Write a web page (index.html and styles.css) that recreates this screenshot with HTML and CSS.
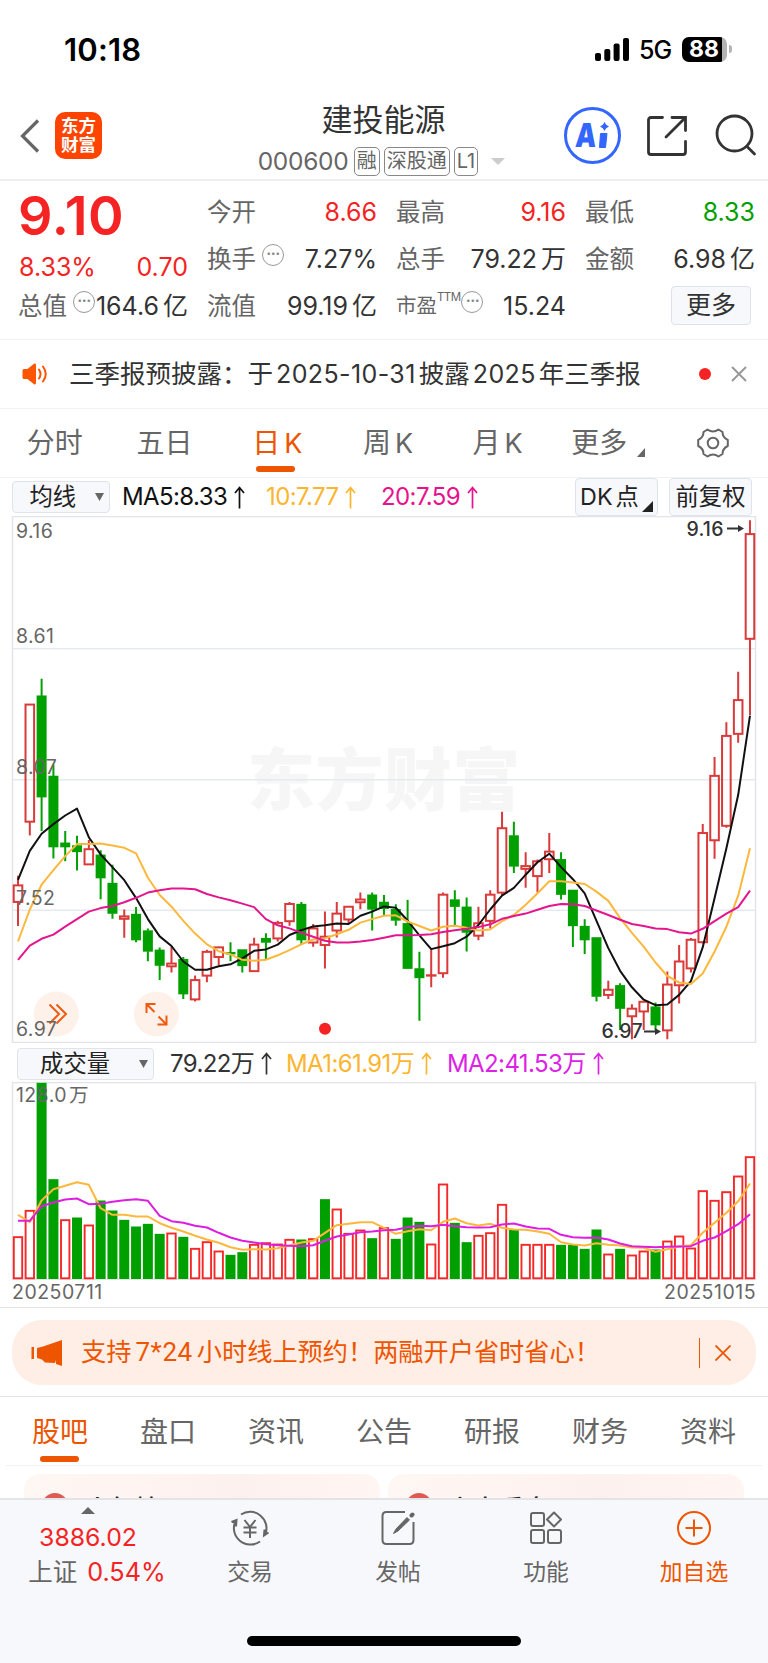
FILE: index.html
```
<!DOCTYPE html>
<html lang="zh-CN">
<head>
    <meta charset="UTF-8">
    <meta name="viewport" content="width=device-width, initial-scale=1.0">
    <title>建投能源 000600</title>
    <link rel="stylesheet" href="styles.css">
</head>
<body>
    <div class="status-bar">
        <div class="clock">10:18</div>
        <div class="status-icons">
            <svg width="34" height="23" viewBox="0 0 34 23">
                <rect x="0" y="15" width="6" height="8" rx="2"/>
                <rect x="9.3" y="11" width="6" height="12" rx="2"/>
                <rect x="18.6" y="5.5" width="6" height="17.5" rx="2"/>
                <rect x="28" y="0" width="6" height="23" rx="2"/>
            </svg>
            <span class="network">5G</span>
            <div class="battery"><span>88</span></div>
            <div class="battery-tip"></div>
        </div>
    </div>

    <div class="header">
        <div class="header-left">
            <svg width="20" height="34" viewBox="0 0 20 34" fill="none" stroke="#666" stroke-width="3.2"><path d="M18 1.5 L2.5 17 L18 32.5"/></svg>
            <div class="logo">东方<br>财富</div>
        </div>
        <div class="header-title">
            <h1>建投能源</h1>
            <div class="stock-code">
                <span class="code">000600</span>
                <span class="tag">融</span>
                <span class="tag">深股通</span>
                <span class="tag">L1</span>
                <svg width="14" height="7" viewBox="0 0 14 7"><path d="M0 0 H14 L7 7 Z" fill="#ccc"/></svg>
            </div>
        </div>
        <div class="header-right">
            <div class="ai-logo">
                <span>A</span>
                <svg width="12" height="27" viewBox="0 0 12 27" fill="#3366ff">
                    <path d="M7.5 0 L9.2 2.8 L12 4.5 L9.2 6.2 L7.5 9 L5.8 6.2 L3 4.5 L5.8 2.8 Z"/>
                    <path d="M3.5 11.5 H10 L8.5 25.5 H2.5 Z" stroke="#3366ff" stroke-linejoin="round"/>
                </svg>
            </div>
            <svg width="40" height="40" viewBox="0 0 40 40" fill="none" stroke="#333" stroke-width="2.8" stroke-linecap="round">
                <path d="M15.5 1.5 H4 Q1.5 1.5 1.5 4 V36 Q1.5 38.5 4 38.5 H36 Q38.5 38.5 38.5 36 V25.5"/>
                <path d="M25 1.5 H38.5 V14.5 M38 2 L19 21"/>
            </svg>
            <svg width="42" height="42" viewBox="0 0 42 42" fill="none" stroke="#333" stroke-width="2.8" stroke-linecap="round">
                <circle cx="19.5" cy="19.5" r="17.5"/>
                <path d="M32 32.5 L39.5 40"/>
            </svg>
        </div>
    </div>

    <div class="quote">
        <div class="quote-col">
            <div class="price">9.10</div>
            <div class="quote-row change"><b class="red">8.33%</b><b class="red">0.70</b></div>
            <div class="quote-row"><span>总值<i class="more-dot">···</i></span><b>164.6<em>亿</em></b></div>
        </div>
        <div class="quote-col">
            <div class="quote-row"><span>今开</span><b class="red">8.66</b></div>
            <div class="quote-row"><span>换手<i class="more-dot">···</i></span><b>7.27%</b></div>
            <div class="quote-row"><span>流值</span><b>99.19<em>亿</em></b></div>
        </div>
        <div class="quote-col">
            <div class="quote-row"><span>最高</span><b class="red">9.16</b></div>
            <div class="quote-row"><span>总手</span><b>79.22<em>万</em></b></div>
            <div class="quote-row"><span class="pe">市盈<sup>TTM</sup><i class="more-dot">···</i></span><b>15.24</b></div>
        </div>
        <div class="quote-col">
            <div class="quote-row"><span>最低</span><b class="green">8.33</b></div>
            <div class="quote-row"><span>金额</span><b>6.98<em>亿</em></b></div>
            <div class="quote-row last"><div class="more-btn">更多</div></div>
        </div>
    </div>

    <div class="notice">
        <svg width="26" height="22" viewBox="0 0 26 22" fill="#ff5500">
            <path d="M0.5 7.5 Q0.5 6 2 6 H5.5 L12 0.8 Q14 0 14 2 V20 Q14 22 12 21.2 L5.5 16 H2 Q0.5 16 0.5 14.5 Z"/>
            <path d="M17 6.5 Q20 11 17 15.5 M21 3.5 Q26.5 11 21 18.5" fill="none" stroke="#ff5500" stroke-width="2" stroke-linecap="round"/>
        </svg>
        <p>三季报预披露：于<span>2025-10-31</span>披露<span>2025</span>年三季报</p>
        <div class="dot"></div>
        <svg width="16" height="16" viewBox="0 0 16 16" stroke="#999" stroke-width="2"><path d="M1 1 L15 15 M15 1 L1 15"/></svg>
    </div>

    <div class="period-tabs">
        <div class="tab">分时</div>
        <div class="tab">五日</div>
        <div class="tab k active">日<span>K</span></div>
        <div class="tab k">周<span>K</span></div>
        <div class="tab k">月<span>K</span></div>
        <div class="tab more">更多<svg width="8" height="9" viewBox="0 0 8 9"><path d="M8 0 V9 H0 Z" fill="#666"/></svg></div>
        <div class="tab gear">
            <svg width="32" height="30" viewBox="0 0 32 30" fill="none" stroke="#666" stroke-width="2" stroke-linejoin="round">
                <path d="M10.5 1.5 Q16 5.5 21.5 1.5 L25.5 4 Q25.5 9.5 30.8 12 V18 Q25.5 20.5 25.5 26 L21.5 28.5 Q16 24.5 10.5 28.5 L6.5 26 Q6.5 20.5 1.2 18 V12 Q6.5 9.5 6.5 4 Z"/>
                <circle cx="16" cy="15" r="5.3"/>
            </svg>
        </div>
    </div>

    <div class="indicator-bar">
        <div class="select ma-select">均线<svg width="9" height="8" viewBox="0 0 9 8"><path d="M0 0 H9 L4.5 8 Z" fill="#666"/></svg></div>
        <div class="ma ma5">MA5:8.33<svg class="up"><use href="#arrow-up"/></svg></div>
        <div class="ma ma10">10:7.77<svg class="up"><use href="#arrow-up"/></svg></div>
        <div class="ma ma20">20:7.59<svg class="up"><use href="#arrow-up"/></svg></div>
        <div class="select dk-btn">DK<em>点</em><svg width="11" height="11" viewBox="0 0 11 11"><path d="M11 0 V11 H0 Z" fill="#222"/></svg></div>
        <div class="select">前复权</div>
    </div>

    <svg id="kline" class="chart" width="768" height="527" viewBox="0 0 768 527"></svg>

    <div class="indicator-bar volume-bar">
        <div class="select vol-select">成交量<svg width="9" height="8" viewBox="0 0 9 8"><path d="M0 0 H9 L4.5 8 Z" fill="#666"/></svg></div>
        <div class="ma vol">79.22万<svg class="up"><use href="#arrow-up"/></svg></div>
        <div class="ma ma10 vol1">MA1:61.91万<svg class="up"><use href="#arrow-up"/></svg></div>
        <div class="ma vol2">MA2:41.53万<svg class="up"><use href="#arrow-up"/></svg></div>
    </div>

    <svg id="volume" class="chart" width="768" height="198" viewBox="0 0 768 198"></svg>

    <div class="dates"><span>20250711</span><span>20251015</span></div>

    <div class="banner-wrap">
        <div class="banner">
            <svg width="31" height="26" viewBox="0 0 31 26" fill="#ee5500">
                <rect x="0.5" y="7" width="2.5" height="12"/>
                <path d="M6 8 L12 6.5 L31 0 V26 L25 24 V20 L24 23 L14 22.5 L11 19.5 L6 18 Z"/>
            </svg>
            <p>支持<span>7*24</span>小时线上预约！两融开户省时省心！</p>
            <div class="divider"></div>
            <svg width="16" height="16" viewBox="0 0 16 16" stroke="#ee5500" stroke-width="1.8"><path d="M0.5 0.5 L15.5 15.5 M15.5 0.5 L0.5 15.5"/></svg>
        </div>
    </div>

    <div class="info-tabs">
        <div class="tab active">股吧</div>
        <div class="tab">盘口</div>
        <div class="tab">资讯</div>
        <div class="tab">公告</div>
        <div class="tab">研报</div>
        <div class="tab">财务</div>
        <div class="tab">资料</div>
    </div>

    <div class="cards">
        <div class="card"><i></i>人气榜</div>
        <div class="card"><i></i>主力看盘</div>
    </div>

    <div class="bottom-bar">
        <div class="index">
            <svg width="14" height="7" viewBox="0 0 14 7"><path d="M0 7 H14 L7 0 Z" fill="#666"/></svg>
            <div class="index-value">3886.02</div>
            <div class="index-change">上证 <span>0.54%</span></div>
        </div>
        <div class="nav-item">
            <svg width="40" height="36" viewBox="0 0 40 36" fill="none" stroke="#666" stroke-width="2">
                <path d="M11 4.5 A16.5 16.5 0 0 1 35.5 24 M38.5 22.5 L34 25.5 L34.5 19.5"/>
                <path d="M30 31.5 A16.5 16.5 0 0 1 5.5 11 M1.5 12 L6.5 10 L6 16.5"/>
                <path d="M14.5 10 L20 17 L25.5 10 M13.5 17.5 H26.5 M13.5 22.5 H26.5 M20 17 V28"/>
            </svg>
            <span>交易</span>
        </div>
        <div class="nav-item">
            <svg width="34" height="36" viewBox="0 0 34 36" fill="none" stroke="#666" stroke-width="2">
                <path d="M24 2 H5.5 Q1.5 2 1.5 6 V30 Q1.5 34 5.5 34 H28.5 Q32.5 34 32.5 30 V12"/>
                <path d="M12.5 23.5 L15 19 L26 7.5 L28.5 10 L17 21 Z" fill="#666" stroke-width="1" stroke-linejoin="round"/>
                <path d="M30.5 5.5 L31.5 4.5" stroke-width="4" stroke-linecap="round"/>
            </svg>
            <span>发帖</span>
        </div>
        <div class="nav-item">
            <svg width="34" height="36" viewBox="0 0 34 36" fill="none" stroke="#666" stroke-width="2">
                <rect x="2" y="3" width="13" height="13" rx="2"/>
                <rect x="2" y="20" width="13" height="13" rx="2"/>
                <rect x="19" y="20" width="13" height="13" rx="2"/>
                <path d="M25 2.5 L32 9.5 L25 16.5 L18 9.5 Z" stroke-linejoin="round"/>
            </svg>
            <span>功能</span>
        </div>
        <div class="nav-item add">
            <svg width="36" height="36" viewBox="0 0 36 36" fill="none" stroke="#ee5500" stroke-width="2">
                <circle cx="18" cy="18" r="16"/>
                <path d="M18 9.5 V26.5 M9.5 18 H26.5"/>
            </svg>
            <span>加自选</span>
        </div>
        <div class="home-indicator"></div>
    </div>

    <svg class="defs">
        <symbol id="arrow-up" viewBox="0 0 11 23"><path d="M5.5 22.5 V1.5 M1 7 L5.5 1.5 L10 7" fill="none" stroke="currentColor" stroke-width="1.7"/></symbol>
    </svg>
    <script src="script.js"></script>
</body>
</html>
```
FILE: styles.css
```
body {
    margin: 0;
    width: 768px;
    height: 1663px;
    overflow: hidden;
    background-color: #fff;
    color: #333;
    font-family: Inter, "Noto Sans CJK SC", sans-serif;
    font-size: 24px;
    line-height: 1;
}

* {
    box-sizing: border-box;
}

svg {
    display: block;
    flex: none;
}

i, em {
    font-style: normal;
}

h1, p {
    margin: 0;
    font-weight: normal;
    white-space: nowrap;
}

.defs {
    position: absolute;
    width: 0;
    height: 0;
}

.red {
    color: #f52323 !important;
}

.green {
    color: #00a000 !important;
}

/* status bar */
.status-bar {
    display: flex;
    justify-content: space-between;
    align-items: center;
    height: 98px;
    padding: 0 36px 0 64px;
    color: #000;
}

.clock {
    font-size: 31px;
    font-weight: 600;
    letter-spacing: 0.2px;
}

.status-icons {
    display: flex;
    align-items: center;
}

.network {
    margin: 3px 0 0 10px;
    width: 43px;
    font-size: 25px;
    font-weight: 500;
    letter-spacing: -1px;
}

.battery {
    width: 45px;
    height: 25px;
    border-radius: 7px;
    background: linear-gradient(to right, #000 40px, #b3b3b3 40px);
    color: #fff;
    font-size: 23px;
    font-weight: 700;
    line-height: 25px;
    padding-left: 7px;
}

.battery-tip {
    width: 3px;
    height: 8px;
    margin-left: 2px;
    border-radius: 0 4px 4px 0;
    background-color: #b3b3b3;
}

/* header */
.header {
    display: flex;
    height: 83px;
    border-bottom: 2px solid #eee;
}

.header-left {
    display: flex;
    align-items: center;
    width: 200px;
    padding: 0 0 7px 20px;
    gap: 15px;
}

.header-left svg {
    margin-top: 1px;
}

.logo {
    width: 47px;
    height: 47px;
    border-radius: 10px;
    background-color: #ff4400;
    color: #fff;
    font-size: 17.5px;
    font-weight: 700;
    line-height: 19px;
    text-align: center;
    padding-top: 4px;
}

.header-title {
    width: 367px;
    display: flex;
    flex-direction: column;
    align-items: center;
}

h1 {
    margin-top: 6px;
    font-size: 31px;
    line-height: 32px;
}

.stock-code {
    display: flex;
    align-items: center;
    margin: 10px 4px 0 0;
    height: 30px;
    gap: 4px;
    color: #666;
}

.code {
    width: 92px;
    font-size: 24.5px;
    letter-spacing: -0.3px;
}

.tag {
    height: 29px;
    border: 1.5px solid #888;
    border-radius: 5px;
    padding: 0 2px;
    font-size: 20px;
    line-height: 27px;
}

.stock-code svg {
    margin-left: 9px;
}

.header-right {
    display: flex;
    align-items: flex-start;
    padding: 18px 11px 0 0;
    margin-left: -3px;
    height: 81px;
}

.header-right > svg {
    margin: 0 0 0 26px;
}

.header-right > svg:last-child {
    margin-left: 28px;
    margin-top: -2px;
}

.ai-logo {
    display: flex;
    align-items: center;
    justify-content: center;
    width: 57px;
    height: 57px;
    margin-top: -9px;
    border: 3px solid #3366ff;
    border-radius: 50%;
    color: #3366ff;
    font-size: 33px;
    font-weight: 900;
}

.ai-logo span {
    margin: 0 -2px 0 -3px;
    transform: scaleX(0.8) skewX(-5deg);
}

/* quote */
.quote {
    display: flex;
    gap: 20px;
    height: 159px;
    padding: 8px 13px 0 19px;
    border-bottom: 1.5px solid #f2f2f5;
}

.quote-col {
    width: 169px;
}

.quote-row {
    display: flex;
    justify-content: space-between;
    align-items: center;
    height: 47px;
    white-space: nowrap;
}

.quote-row span {
    display: flex;
    align-items: center;
    color: #666;
    font-size: 24.5px;
    margin-left: -1px;
}

.quote-row b {
    font-size: 25px;
    font-weight: 400;
    color: #333;
}

.quote-row em {
    margin-left: 4px;
}

.price {
    height: 54px;
    font-size: 54px;
    font-weight: 600;
    line-height: 54px;
    color: #f52323;
    letter-spacing: 0.6px;
    margin-left: -1px;
}

.change {
    height: 40px;
    margin-top: 4px;
    margin-bottom: -4px;
}

.more-dot {
    width: 22px;
    height: 22px;
    margin: -10px 0 0 6px;
    border: 1.8px solid #999;
    border-radius: 50%;
    color: #888;
    font-size: 15px;
    font-weight: 700;
    line-height: 18px;
    text-align: center;
    letter-spacing: -0.5px;
}

.quote-col:first-child .quote-row:last-child b {
    margin-left: -6px;
}

.quote-row .pe {
    font-size: 20.5px;
}

.pe sup {
    font-size: 11.5px;
    letter-spacing: -0.6px;
    margin: -18px 0 0 0;
    line-height: 15px;
}

.pe .more-dot {
    margin-left: 1px;
}

.quote-row.last {
    justify-content: flex-end;
    padding-right: 4px;
    height: 44px;
}

.more-btn {
    width: 80px;
    height: 39px;
    border: 1.5px solid #dfe2ea;
    border-radius: 4px;
    background-color: #f7f8fb;
    text-align: center;
    line-height: 36px;
    font-size: 25px;
}

/* notice */
.notice {
    display: flex;
    align-items: center;
    height: 69px;
    padding: 0 21px 0 22px;
    border-bottom: 1.5px solid #f2f2f5;
}

.notice p {
    flex: 1;
    margin-left: 21px;
    font-size: 25.5px;
}

.notice span {
    margin: 0 3px;
    font-size: 25px;
    letter-spacing: 0.4px;
}

.dot {
    width: 12px;
    height: 12px;
    margin-right: 20px;
    border-radius: 50%;
    background-color: #f52323;
}

/* tabs */
.period-tabs,
.info-tabs {
    display: flex;
    height: 69px;
    border-bottom: 1.5px solid #f2f2f5;
}

.tab {
    position: relative;
    flex: none;
    width: 14.285%;
    display: flex;
    align-items: center;
    justify-content: center;
    color: #666;
    font-size: 28px;
}

.tab span {
    margin-left: 4px;
    font-size: 27px;
}

.tab.active {
    color: #ee5500;
}

.tab.active::after {
    content: "";
    position: absolute;
    left: 50%;
    bottom: 5px;
    width: 39px;
    height: 6px;
    margin-left: -20px;
    border-radius: 3px;
    background-color: #ee5500;
}

.tab.k {
    padding-left: 6px;
}

.tab.k + .tab.k {
    padding-left: 8px;
}

.tab.k.active::after {
    margin-left: -18px;
}

.tab.more {
    padding-left: 10px;
}

.tab.more svg {
    margin: 19px 0 0 10px;
}

/* indicator bars */
.indicator-bar {
    position: relative;
    display: flex;
    align-items: center;
    height: 38px;
    padding: 0 16px 0 12px;
    white-space: nowrap;
}

.select {
    position: relative;
    display: flex;
    align-items: center;
    justify-content: center;
    height: 38px;
    width: 83px;
    border: 1.5px solid #e0e3ea;
    border-radius: 4px;
    background-color: #f7f8fb;
    color: #222;
    font-size: 23.3px;
}

.select em {
    margin-left: 3px;
}

.ma-select,
.vol-select {
    width: 98px;
    height: 32px;
    justify-content: flex-end;
    padding-right: 5px;
}

.ma-select svg,
.vol-select svg {
    margin-left: 19px;
}

.dk-btn {
    margin: 0 11px 0 auto;
    padding-right: 14px;
}

.dk-btn svg {
    position: absolute;
    right: 4px;
    bottom: 3px;
}

.ma {
    display: flex;
    align-items: center;
    margin-left: 12px;
    font-size: 24px;
    letter-spacing: -0.6px;
}

.up {
    width: 11px;
    height: 23px;
    margin-left: 7px;
}

.ma5 {
    width: 132px;
    color: #111;
}

.ma10 {
    width: 103px;
    color: #fcb52f;
}

.ma20 {
    color: #e8128c;
}

.volume-bar {
    height: 39px;
    padding: 2px 0 0 17px;
}

.vol-select {
    width: 137px;
}

.vol-select svg {
    margin-left: 29px;
}

.vol {
    margin-left: 16px;
    width: 104px;
}

.vol1 {
    width: 149px;
}

.vol2 {
    color: #dd22e5;
}

/* charts */
.chart text {
    font-size: 19.5px;
    letter-spacing: 0.4px;
    fill: #666;
}

.chart .watermark {
    font-family: "Noto Sans CJK SC", sans-serif;
    font-size: 68px;
    font-weight: 900;
    fill: #f6f6f6;
}

.chart .mark {
    font-weight: 500;
    letter-spacing: 0.2px;
    fill: #333;
}

.dates {
    display: flex;
    justify-content: space-between;
    height: 28px;
    padding: 3px 12px 0 12px;
    border-bottom: 1.5px solid #e4e5e8;
    color: #666;
    font-size: 19.5px;
    letter-spacing: 0.5px;
}

/* banner */
.banner-wrap {
    height: 89px;
    padding: 12px 12px 0;
    border-bottom: 1.5px solid #e4e5e8;
}

.banner {
    display: flex;
    align-items: center;
    height: 65px;
    padding: 0 25px 0 19px;
    border-radius: 30px;
    background-color: #feeee5;
    color: #ee5500;
}

.banner p {
    flex: 1;
    margin-left: 19px;
    font-size: 25.2px;
}

.banner span {
    margin: 0 4px;
    font-family: Roboto, sans-serif;
    font-size: 26px;
    letter-spacing: 0.6px;
}

.divider {
    width: 1.5px;
    height: 30px;
    margin-right: 15px;
    background-color: #ee5500;
}

.info-tabs {
    margin: 0 6px;
}

.info-tabs .tab {
    padding-top: 2px;
}

.info-tabs .active::after {
    bottom: 3px;
}

/* cards */
.cards {
    display: flex;
    gap: 8px;
    height: 32px;
    padding: 8px 24px 0;
    overflow: hidden;
}

.card {
    display: flex;
    align-items: center;
    width: 356px;
    height: 70px;
    padding: 0 0 0 18px;
    border-radius: 16px;
    background: linear-gradient(to right, #fff7f4, #fdf1ef 60%, #fff5f3);
    font-size: 25px;
    font-weight: 500;
    color: #222;
}

.card i {
    width: 26px;
    height: 26px;
    margin: -6px 17px 0 0;
    border-radius: 50%;
    background-color: #dd5a55;
}

/* bottom bar */
.bottom-bar {
    position: relative;
    display: flex;
    height: 165px;
    border-top: 2px solid #e2e4e7;
    background-color: #f7f8fb;
}

.index {
    display: flex;
    flex-direction: column;
    align-items: center;
    width: 176px;
    padding-top: 7px;
}

.index-value {
    margin-top: 10px;
    font-size: 24.8px;
    line-height: 26px;
    color: #f52323;
}

.index-change {
    margin-top: 8px;
    padding-left: 18px;
    font-size: 24.5px;
    line-height: 28px;
    color: #666;
}

.index-change span {
    margin-left: 3px;
    font-size: 25.2px;
    color: #f52323;
}

.nav-item {
    display: flex;
    flex-direction: column;
    align-items: center;
    width: 148px;
    padding-top: 10px;
    font-size: 22.8px;
    color: #666;
}

.nav-item span {
    margin-top: 13px;
    line-height: 26px;
}

.nav-item.add {
    color: #ee5500;
}

.home-indicator {
    position: absolute;
    left: 247px;
    bottom: 17px;
    width: 274px;
    height: 10px;
    border-radius: 5px;
    background-color: #000;
}
```
FILE: script.js
```
// color, high, body top, body bottom, low
const candles = [
    ['r', 1062, 1090, 1138, 1208], ['r', 565, 565, 905, 945], ['g', 490, 540, 833, 932], ['g', 740, 773, 978, 1012],
    ['g', 932, 967, 978, 1020], ['g', 946, 975, 992, 1047], ['r', 958, 985, 1029, 1029], ['g', 988, 1002, 1068, 1130],
    ['g', 1030, 1084, 1171, 1187], ['r', 1160, 1180, 1187, 1242], ['g', 1153, 1174, 1248, 1255], ['g', 1215, 1222, 1281, 1310],
    ['g', 1270, 1278, 1322, 1365], ['r', 1268, 1317, 1325, 1343], ['g', 1298, 1305, 1405, 1420], ['r', 1352, 1365, 1421, 1427],
    ['r', 1277, 1283, 1352, 1371], ['r', 1268, 1270, 1298, 1322], ['g', 1255, 1285, 1289, 1310], ['g', 1277, 1277, 1323, 1343],
    ['r', 1242, 1262, 1339, 1341], ['g', 1229, 1244, 1255, 1304], ['r', 1193, 1199, 1244, 1253], ['r', 1138, 1144, 1194, 1207],
    ['g', 1138, 1145, 1248, 1260], ['r', 1202, 1215, 1256, 1268], ['r', 1166, 1239, 1263, 1331], ['r', 1138, 1172, 1221, 1241],
    ['r', 1150, 1152, 1189, 1202], ['r', 1111, 1131, 1139, 1159], ['g', 1111, 1118, 1159, 1221], ['g', 1118, 1139, 1157, 1176],
    ['g', 1145, 1160, 1191, 1207], ['g', 1132, 1201, 1331, 1331], ['g', 1283, 1332, 1358, 1483], ['r', 1276, 1351, 1352, 1386],
    ['r', 1111, 1117, 1345, 1358], ['g', 1104, 1132, 1151, 1205], ['g', 1125, 1153, 1226, 1282], ['r', 1152, 1200, 1236, 1249],
    ['r', 1104, 1117, 1193, 1215], ['r', 876, 924, 1111, 1118], ['g', 905, 946, 1034, 1054], ['r', 994, 1034, 1042, 1097],
    ['r', 1015, 1020, 1063, 1110], ['r', 938, 992, 1014, 1054], ['g', 994, 1015, 1116, 1131], ['g', 1104, 1104, 1207, 1269],
    ['g', 1188, 1209, 1248, 1289], ['g', 1242, 1242, 1412, 1427], ['r', 1367, 1393, 1408, 1420], ['g', 1374, 1381, 1447, 1510],
    ['r', 1435, 1448, 1470, 1537], ['r', 1427, 1428, 1456, 1510], ['g', 1430, 1443, 1495, 1510], ['r', 1340, 1378, 1511, 1537],
    ['r', 1263, 1311, 1380, 1433], ['r', 1243, 1248, 1331, 1343], ['r', 912, 938, 1255, 1259], ['r', 717, 772, 959, 1013],
    ['r', 616, 656, 917, 923], ['r', 470, 552, 650, 676], ['r', 30, 70, 374, 595]
];

const ma5 = [1074, 990, 940, 912, 887, 867, 950, 1000, 1037, 1075, 1127, 1188, 1238, 1266, 1311, 1335, 1335, 1325, 1319, 1302, 1280,
    1276, 1262, 1234, 1220, 1209, 1206, 1201, 1202, 1178, 1166, 1151, 1155, 1192, 1235, 1275, 1267, 1258, 1239, 1205, 1160, 1120,
    1097, 1059, 1023, 998, 1037, 1072, 1113, 1193, 1272, 1338, 1386, 1422, 1438, 1436, 1408, 1368, 1270, 1127, 982, 827, 597];
const ma10 = [1253, 1160, 1088, 1046, 1005, 970, 970, 968, 974, 981, 997, 1068, 1118, 1152, 1193, 1230, 1261, 1281, 1290, 1306, 1309,
    1306, 1293, 1278, 1261, 1247, 1244, 1232, 1219, 1198, 1188, 1178, 1177, 1195, 1208, 1221, 1210, 1207, 1213, 1221, 1218, 1194,
    1176, 1146, 1113, 1078, 1078, 1082, 1086, 1108, 1135, 1185, 1228, 1268, 1314, 1353, 1372, 1376, 1346, 1282, 1210, 1120, 982];
const ma20 = [1306, 1265, 1245, 1233, 1210, 1188, 1166, 1156, 1150, 1139, 1126, 1111, 1104, 1099, 1099, 1101, 1115, 1125, 1133, 1143, 1153,
    1188, 1206, 1215, 1227, 1239, 1251, 1256, 1256, 1253, 1249, 1242, 1235, 1235, 1234, 1232, 1225, 1220, 1216, 1211, 1203, 1187,
    1179, 1172, 1161, 1150, 1144, 1145, 1150, 1163, 1176, 1190, 1202, 1208, 1215, 1217, 1226, 1230, 1216, 1194, 1172, 1153, 1105];

const volumes = [590, 511, 127, 416, 539, 531, 555, 480, 510, 538, 558, 550, 580, 579, 589, 625, 605, 633, 643, 635, 613,
    608, 612, 598, 597, 596, 476, 507, 580, 570, 593, 563, 595, 531, 544, 612, 432, 547, 605, 586, 578, 493,
    568, 613, 613, 613, 613, 613, 625, 567, 642, 625, 645, 633, 627, 603, 588, 624, 452, 481, 455, 408, 350];
// bars drawn solid green
const volumeDown = [2, 3, 5, 7, 8, 9, 10, 11, 12, 14, 18, 19, 24, 26, 30, 32, 33, 34, 37, 38, 42, 46, 47, 48, 49, 51, 54];
const volMa1 = [523, 545, 480, 446, 436, 425, 433, 503, 523, 523, 528, 528, 548, 562, 573, 586, 597, 607, 620, 628, 626,
    627, 623, 615, 606, 601, 577, 554, 550, 545, 545, 562, 580, 572, 566, 569, 544, 534, 548, 555, 550, 562,
    567, 568, 573, 580, 605, 612, 615, 608, 613, 615, 621, 622, 634, 626, 618, 614, 577, 547, 517, 482, 429];
const volMa2 = [541, 541, 497, 486, 477, 474, 491, 490, 484, 479, 476, 481, 526, 542, 547, 556, 561, 577, 591, 601, 606,
    611, 614, 616, 617, 614, 601, 588, 582, 575, 573, 569, 568, 560, 556, 557, 553, 557, 560, 561, 560, 552,
    549, 558, 564, 565, 583, 590, 592, 591, 597, 609, 617, 619, 620, 619, 618, 617, 601, 591, 572, 551, 521];

const RED = '#d93a3a';
const GREEN = '#00a000';

const x = i => 18 + i * 11.806;
const priceY = v => v * 0.34439 - 6;
const volY = v => v / 3 - 41.5;

function line(values, y, color) {
    const points = values.map((v, i) => `${x(i).toFixed(1)},${y(v).toFixed(1)}`).join(' ');
    return `<polyline points="${points}" fill="none" stroke="${color}" stroke-width="2" stroke-linejoin="round"/>`;
}

function hline(y, color) {
    return `<path d="M12.5 ${y} H755.5" stroke="${color}" stroke-width="1.5"/>`;
}

function drawKline() {
    let out = `<text class="watermark" x="247" y="289">东方财富</text>`;
    out += [132.8, 263.7, 394.2].map(y => hline(y, '#e6e9f1')).join('');
    out += `<rect x="12.5" y="0.5" width="743" height="526" fill="none" stroke="#e2e4ea" stroke-width="1.5"/>`;

    candles.forEach(([c, high, top, bottom, low], i) => {
        const cx = x(i);
        const t = priceY(top);
        const b = priceY(bottom);
        const color = c === 'r' ? RED : GREEN;
        out += `<path d="M${cx} ${priceY(high)} V${t} M${cx} ${b} V${priceY(low)}" stroke="${color}" stroke-width="2"/>`;
        if (c === 'r') {
            out += `<rect x="${cx - 4.3}" y="${t}" width="8.6" height="${b - t}" fill="none" stroke="${color}" stroke-width="2"/>`;
        } else {
            out += `<rect x="${cx - 5}" y="${t - 0.5}" width="10" height="${b - t + 1}" fill="${color}"/>`;
        }
    });

    out += line(ma5, priceY, '#111') + line(ma10, priceY, '#fcb83c') + line(ma20, priceY, '#e3168d');

    out += `<circle cx="325" cy="512.7" r="6" fill="#f52323"/>`;
    out += `<g fill="none" stroke="#f05a10" stroke-width="2">
        <circle cx="56.3" cy="498" r="22.5" fill="#feefe8" fill-opacity="0.9" stroke="none"/>
        <circle cx="156.3" cy="498" r="22.5" fill="#feefe8" fill-opacity="0.9" stroke="none"/>
        <path d="M49.5 488.5 L59 498 L49.5 507.5 M56.5 488.5 L66 498 L56.5 507.5"/>
        <path d="M155.5 488 H146.5 V497 M146.5 488 L154.5 496 M157.5 508.5 H166.5 V499.5 M166.5 508.5 L158.5 500.5"/>
    </g>`;

    [['9.16', 22], ['8.61', 126.5], ['8.07', 258], ['7.52', 389], ['6.97', 520]].forEach(([label, y]) => {
        out += `<text x="16" y="${y}">${label}</text>`;
    });
    out += `<text class="mark" x="686.5" y="20">9.16</text><text class="mark" x="601.5" y="521.5">6.97</text>`;
    out += `<path d="M727 12.5 H739 M644 515.5 H656" stroke="#333" stroke-width="1.8"/>
        <path d="M738 9 L744 12.5 L738 16 Z M655 512 L661 515.5 L655 519 Z" fill="#333"/>`;
    document.getElementById('kline').innerHTML = out;
}

function drawVolume() {
    let out = `<rect x="12.5" y="0.5" width="743" height="197" fill="none" stroke="#e2e4ea" stroke-width="1.5"/>`;
    volumes.forEach((v, i) => {
        const cx = x(i);
        const t = volY(v);
        if (volumeDown.includes(i)) {
            out += `<rect x="${cx - 5}" y="${t}" width="10" height="${197 - t}" fill="${GREEN}"/>`;
        } else {
            out += `<rect x="${cx - 4.2}" y="${t}" width="8.4" height="${196.3 - t}" fill="none" stroke="#f52828" stroke-width="1.9"/>`;
        }
    });
    out += line(volMa1, volY, '#fcb83c') + line(volMa2, volY, '#dd1ee0');
    out += `<text x="16" y="19.5">128.0<tspan dx="2">万</tspan></text>`;
    document.getElementById('volume').innerHTML = out;
}

drawKline();
drawVolume();
```
